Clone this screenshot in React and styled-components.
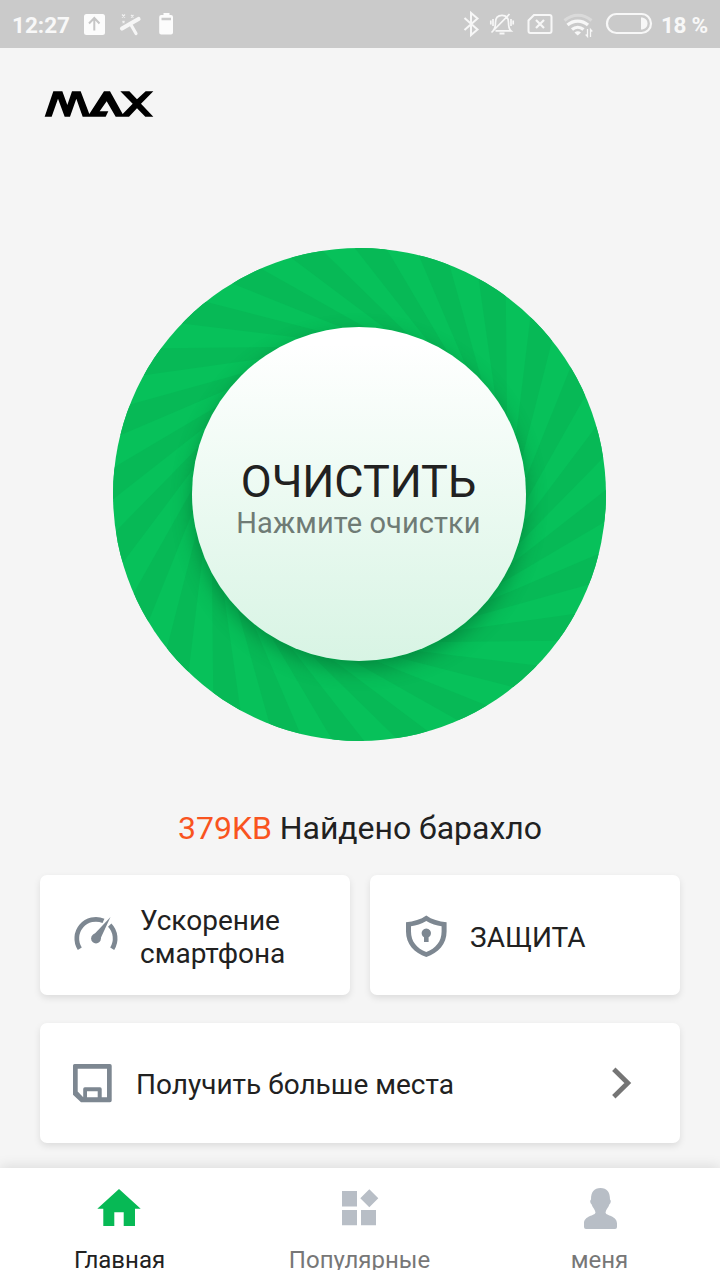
import React from 'react';
import styled, { createGlobalStyle } from 'styled-components';

const GlobalStyle = createGlobalStyle`
  * {
    box-sizing: border-box;
  }
  body {
    margin: 0;
    background: #f5f5f5;
    font-family: Roboto, 'Noto Sans', sans-serif;
    color: #212121;
  }
  svg {
    flex: none;
  }
`;

const Screen = styled.div`
  display: flex;
  flex-direction: column;
  width: 720px;
  height: 1280px;
  overflow: hidden;
  background: #f5f5f5;
`;

const StatusBar = styled.div`
  display: flex;
  flex: none;
  align-items: center;
  height: 48px;
  padding: 0 12px 0 12px;
  background: #cacaca;
  color: #f8f8f8;
`;

const StatusText = styled.span`
  width: ${props => props.$width}px;
  font-size: 22.5px;
  font-weight: 700;
  line-height: 28px;
  letter-spacing: ${props => props.$spacing || 0}px;
  white-space: nowrap;
  padding-top: 1px;
`;

const StatusIcons = styled.svg`
  margin-left: ${props => props.$left || 0}px;
  margin-right: ${props => props.$right || 0}px;
`;

const Spacer = styled.div`
  flex: 1;
`;

const Header = styled.header`
  flex: none;
  height: 199px;
  padding: 43px 44px;
`;

const CleanArea = styled.div`
  display: grid;
  flex: none;
  place-items: center;
  width: 493px;
  height: 494px;
  margin-left: 113px;

  > * {
    grid-area: 1 / 1;
  }
`;

const CleanButton = styled.button`
  display: flex;
  flex-direction: column;
  align-items: center;
  width: 334px;
  height: 334px;
  margin: 0 1px 1px 0;
  padding: 129px 1px 0 0;
  border: 0;
  border-radius: 50%;
  background: linear-gradient(#ffffff 5%, #ecfaf2 50%, #d8f4e4 100%);
  box-shadow: 0 8px 20px rgba(0, 80, 35, 0.45);
  font-family: inherit;
  color: #212121;
`;

const CleanTitle = styled.span`
  font-size: 45px;
  line-height: 51px;
  letter-spacing: -0.1px;
  white-space: nowrap;
`;

const CleanHint = styled.span`
  font-size: 29px;
  line-height: 32px;
  letter-spacing: 0.1px;
  white-space: nowrap;
  color: #6f7b75;
`;

const Summary = styled.p`
  flex: none;
  margin: 68px 0 28px;
  font-size: 32px;
  line-height: 38px;
  letter-spacing: -0.04px;
  text-align: center;
`;

const JunkSize = styled.span`
  color: #f9541f;
`;

const Cards = styled.div`
  display: grid;
  flex: none;
  grid-template-columns: 310px 310px;
  gap: 28px 20px;
  padding: 0 40px;
`;

const Card = styled.div`
  display: flex;
  align-items: center;
  grid-column: ${props => (props.$wide ? '1 / -1' : 'auto')};
  height: 120px;
  padding: ${props => (props.$wide ? 2 : 4)}px 47px 0 33px;
  border-radius: 7px;
  background: #fff;
  box-shadow: 0 3px 7px rgba(0, 0, 0, 0.1);
`;

const CardLabel = styled.span`
  flex: 1;
  margin-left: ${props => props.$left}px;
  font-size: 28px;
  line-height: 33px;
`;

const Nav = styled.nav`
  display: grid;
  flex: none;
  grid-template-columns: repeat(3, 1fr);
  height: 112px;
  margin-top: 25px;
  background: #fff;
  box-shadow: 0 -2px 12px rgba(0, 0, 0, 0.1);
`;

const NavItem = styled.a`
  display: flex;
  flex-direction: column;
  align-items: center;
  height: 102px;
  padding-top: 19px;
  overflow: hidden;
  color: ${props => (props.$active ? '#212121' : '#777777')};
`;

const NavLabel = styled.span`
  flex: none;
  margin-top: 15px;
  padding-right: 1px;
  font-size: 24px;
  line-height: 28px;
`;

const RAY_COUNT = 24;
const OUTER = 246.5;
const INNER = 160;
const TILT = 37;

const polar = (r, deg) => {
  const a = (deg * Math.PI) / 180;
  return `${(OUTER + r * Math.sin(a)).toFixed(2)},${(OUTER - r * Math.cos(a)).toFixed(2)}`;
};

// how far an edge turns between the outer rim and the inner one
const TWIST =
  (Math.asin((OUTER * Math.sin((TILT * Math.PI) / 180)) / INNER) * 180) / Math.PI - TILT;

const rays = Array.from({ length: RAY_COUNT }, (_, i) => {
  const end = i * 15 - 8.6;
  const start = end - 7.5;
  return [
    polar(OUTER, start),
    polar(OUTER + 2, start + 3.75),
    polar(OUTER, end),
    polar(INNER, end + TWIST),
    polar(INNER, start + TWIST),
  ].join(' ');
});

const Swirl = () => (
  <svg width="493" height="493" viewBox="0 0 493 493">
    <clipPath id="disc">
      <circle cx="246.5" cy="246.5" r="246.5" />
    </clipPath>
    <circle cx="246.5" cy="246.5" r="246.5" fill="#07c15a" />
    <g clipPath="url(#disc)" fill="#07b956">
      {rays.map(points => (
        <polygon key={points} points={points} />
      ))}
    </g>
  </svg>
);

const Logo = () => (
  <svg width="110" height="26" viewBox="132 273 330 78">
    <path
      fillRule="evenodd"
      d="M134 350 160 274H187L202 315 216 274H242L268 342 312 274H330L368 342 398 311 361 274H388L411 298 437 274H460L423 311 460 350H436L411 325 387 350H347L320 304 299 334H325L317 350H248L229 296 210 350H194L174 296 155 350Z"
    />
  </svg>
);

const LeftIcons = () => (
  <StatusIcons width="94" height="28" viewBox="82 10 94 28" $left={2}>
    <rect x="84" y="14" width="21" height="21" rx="2.5" fill="#fcfcfc" />
    <path d="M94.300 30.500V18.500M89 23.500 94.300 18 99.500 23.500" fill="none" stroke="#c6c6c6" strokeWidth="2" />
    <path d="M122 28.500 138.500 19" stroke="#f6f6f6" strokeWidth="4.200" strokeLinecap="round" />
    <path d="M130.500 24 136 33.500" stroke="#f6f6f6" strokeWidth="3.200" strokeLinecap="round" />
    <path d="M122 14.500l3 3m0-3-3 3M131 15l2.500 2.500m0-2.500-2.500 2.500M122.500 21l2 2m0-2-2 2" stroke="#f0f0f0" strokeWidth="1.200" />
    <path d="M163.500 13h6v2h1.500a2 2 0 0 1 2 2v15.500a2 2 0 0 1-2 2h-9.800a2 2 0 0 1-2-2V17a2 2 0 0 1 2-2h2.300zM161.500 17.800v2.400h9.500v-2.400z" fill="#fcfcfc" fillRule="evenodd" />
  </StatusIcons>
);

const RightIcons = () => (
  <StatusIcons width="192" height="28" viewBox="462 10 192 28" $right={7}>
    <g fill="none" stroke="#f7f7f7" strokeWidth="2">
      <path d="M464.500 18 477.500 29.500 471 35V13l6.500 5.500L464.500 30" />
      <path d="M495.500 30.800h15.500c-2.400-2-2.500-4-2.500-8.300 0-4.500-2.500-7.200-6.500-7.200s-6.500 2.700-6.500 7.200c0 4.300-.5 6.300-2.500 8.300M491.500 32.500 509.500 14M493 19v7M490.800 20.500v4M511 19v7M513.200 20.500v4" strokeWidth="1.700" />
      <path d="M499.500 33.500h5" />
      <path d="M534 15h15.500a2 2 0 0 1 2 2v14a2 2 0 0 1-2 2H530.500a2 2 0 0 1-2-2V20.500z" />
      <path d="M536 20l8 8m0-8-8 8" strokeWidth="2.200" />
      <path d="M564.500 20.500c8-7 19-7 27 0" stroke="#dadada" strokeWidth="3" />
      <path d="M567.500 25c6-5.300 14.500-5.300 20.500 0M572 29.500c3.500-3 8-3 11.500 0" strokeWidth="3.200" />
      <path d="M587.500 29v7.500l-1.800-2M590.500 37v-7.500l1.800 2" strokeWidth="1.300" />
      <rect x="607" y="14" width="44" height="19" rx="9.500" strokeWidth="2.200" />
    </g>
    <path d="M574.500 32.500c2-1.800 4.500-1.800 6.500 0l-3.300 3z" fill="#f7f7f7" />
    <path d="M641 17.500c4 0 6.500 2.500 6.500 6s-2.500 6-6.500 6z" fill="#f7f7f7" />
  </StatusIcons>
);

const SpeedIcon = () => (
  <svg width="46" height="44" viewBox="-23 -23.500 46 44">
    <g fill="none" stroke="#7d8791" strokeWidth="4.700">
      <path d="M-16.200 10.200A19.100 19.100 0 0 1 7.500 -17.600" />
      <path d="M13.700 -13.300A19.100 19.100 0 0 1 16.200 10.200" />
    </g>
    <path d="M14.500 -21.500 4.300 .5 -2.500 -3.500z" fill="#7d8791" />
    <circle r="4.900" fill="#7d8791" />
  </svg>
);

const ShieldIcon = () => (
  <svg width="46" height="44" viewBox="-2.3 0.5 46 44">
    <path
      fill="#7d8791"
      fillRule="evenodd"
      d="M21 1C15.500 5 8.500 7 .7 7.700V17C.7 29.500 9 38.500 21 42.500 33 38.500 41.300 29.500 41.300 17V7.700C33.500 7 26.500 5 21 1ZM21 6.500C26 9.300 31 11 36.300 11.700V17C36.300 27 30.500 33.800 21 37.500 11.500 33.800 5.700 27 5.700 17V11.700C11 11 16 9.300 21 6.500Z"
    />
    <path fill="#7d8791" d="M18.700 22.800a4.700 4.700 0 1 1 4.600 0V27.500h-4.600z" />
  </svg>
);

const StorageIcon = () => (
  <svg width="39" height="40" viewBox="0 0 39 40">
    <path
      fill="#7d8791"
      fillRule="evenodd"
      d="M1.500 0H37a1.700 1.700 0 0 1 1.700 1.700V36.600a1.700 1.700 0 0 1-1.700 1.700H8L0 30.800V1.500A1.500 1.500 0 0 1 1.500 0ZM4.700 4.800V27.500L10.200 33.300V25A1.700 1.700 0 0 1 11.900 23.300H27A1.700 1.700 0 0 1 28.700 25V33.300H34V4.800ZM14 27.300V33.300H24.700V27.300Z"
    />
  </svg>
);

const Chevron = () => (
  <svg width="22" height="34" viewBox="0 0 22 34">
    <path d="M2.800 2.300 16.800 16 2.800 29.700" fill="none" stroke="#757575" strokeWidth="4.800" />
  </svg>
);

const HomeIcon = () => (
  <svg width="46" height="44" viewBox="-1 0 46 44">
    <path d="M21 2 42.700 21.700H37V39H25.700V25.300H16.300V39H5.300V21.700H-.7z" fill="#07b955" />
  </svg>
);

const AppsIcon = () => (
  <svg width="38" height="44" viewBox="0 0 38 44">
    <path d="M1 4h15v15.500H1zM1 23h15v15.300H1zM20 23h15v15.300H20zM28.300 2.300l9 9-9 9-9-9z" fill="#b8bec6" />
  </svg>
);

const PersonIcon = () => (
  <svg width="34" height="44" viewBox="-1 0 34 44">
    <path
      fill="#b8bec6"
      d="M16.500 1C23 1 26 5 26 12.500 27.300 13.300 27 16 25.300 17.500 24.700 20 22 22.500 21.500 25.500 22 29 33 28.500 33 36.500V40Q33 42 31 42H2Q0 42 0 40V36.500C0 28.500 11 29 11.500 25.500 11 22.500 8.300 20 7.700 17.500 6 16 5.700 13.300 7 12.500 7 5 10 1 16.500 1Z"
    />
  </svg>
);

const tabs = [
  { id: 'home', label: 'Главная', Icon: HomeIcon },
  { id: 'popular', label: 'Популярные', Icon: AppsIcon },
  { id: 'me', label: 'меня', Icon: PersonIcon },
];

const App = () => (
  <Screen>
    <GlobalStyle />
    <StatusBar>
      <StatusText $width={68}>12:27</StatusText>
      <LeftIcons />
      <Spacer />
      <RightIcons />
      <StatusText $width={47} $spacing={-0.3}>18 %</StatusText>
    </StatusBar>

    <Header>
      <Logo />
    </Header>

    <CleanArea>
      <Swirl />
      <CleanButton>
        <CleanTitle>ОЧИСТИТЬ</CleanTitle>
        <CleanHint>Нажмите очистки</CleanHint>
      </CleanButton>
    </CleanArea>

    <Summary>
      <JunkSize>379KB</JunkSize> Найдено барахло
    </Summary>

    <Cards>
      <Card>
        <SpeedIcon />
        <CardLabel $left={21}>Ускорение смартфона</CardLabel>
      </Card>
      <Card>
        <ShieldIcon />
        <CardLabel $left={21}>ЗАЩИТА</CardLabel>
      </Card>
      <Card $wide>
        <StorageIcon />
        <CardLabel $left={24}>Получить больше места</CardLabel>
        <Chevron />
      </Card>
    </Cards>

    <Nav>
      {tabs.map(({ id, label, Icon }) => (
        <NavItem key={id} $active={id === 'home'}>
          <Icon />
          <NavLabel>{label}</NavLabel>
        </NavItem>
      ))}
    </Nav>
  </Screen>
);

export default App;
